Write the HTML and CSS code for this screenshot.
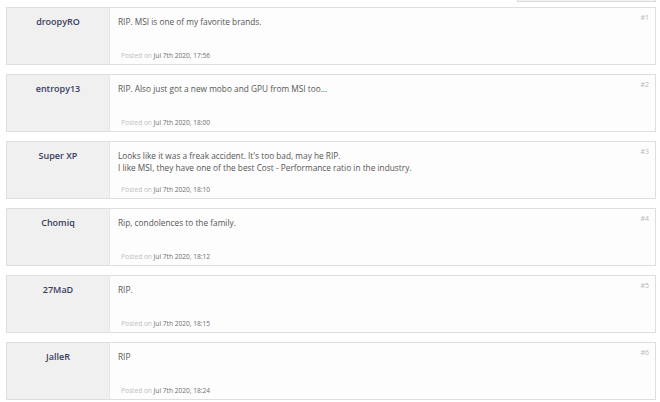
FILE: index.html
```html
<!DOCTYPE html>
<html>
<head>
<meta charset="utf-8">
<link rel="stylesheet" href="styles.css">
</head>
<body>
<div class="page">
  <div class="topbar"><div class="topbox"></div></div>

  <div class="post">
    <div class="author">droopyRO</div>
    <div class="body">
      <div class="num">#1</div>
      <div class="text">RIP. MSI is one of my favorite brands.</div>
      <div class="meta"><span class="lbl">Posted on</span> Jul 7th 2020, 17:56</div>
    </div>
  </div>

  <div class="post">
    <div class="author">entropy13</div>
    <div class="body">
      <div class="num">#2</div>
      <div class="text">RIP. Also just got a new mobo and GPU from MSI too...</div>
      <div class="meta"><span class="lbl">Posted on</span> Jul 7th 2020, 18:00</div>
    </div>
  </div>

  <div class="post">
    <div class="author">Super XP</div>
    <div class="body">
      <div class="num">#3</div>
      <div class="text">Looks like it was a freak accident. It's too bad, may he RIP.<br>I like MSI, they have one of the best Cost - Performance ratio in the industry.</div>
      <div class="meta"><span class="lbl">Posted on</span> Jul 7th 2020, 18:10</div>
    </div>
  </div>

  <div class="post">
    <div class="author">Chomiq</div>
    <div class="body">
      <div class="num">#4</div>
      <div class="text">Rip, condolences to the family.</div>
      <div class="meta"><span class="lbl">Posted on</span> Jul 7th 2020, 18:12</div>
    </div>
  </div>

  <div class="post">
    <div class="author">27MaD</div>
    <div class="body">
      <div class="num">#5</div>
      <div class="text">RIP.</div>
      <div class="meta"><span class="lbl">Posted on</span> Jul 7th 2020, 18:15</div>
    </div>
  </div>

  <div class="post">
    <div class="author">JalleR</div>
    <div class="body">
      <div class="num">#6</div>
      <div class="text">RIP</div>
      <div class="meta"><span class="lbl">Posted on</span> Jul 7th 2020, 18:24</div>
    </div>
  </div>
</div>
</body>
</html>
```

FILE: styles.css
```css
* { box-sizing: border-box; }
html, body { margin: 0; padding: 0; background: #ffffff; }
body { font-family: "Open Sans", "Liberation Sans", sans-serif; }

.page {
  padding: 0 4px 0 6px;
  display: flex;
  flex-direction: column;
  gap: 9px;
}

.topbar {
  display: flex;
  justify-content: flex-end;
  height: 2px;
  margin-bottom: -4px;
}
.topbox {
  width: 139px;
  height: 2px;
  background: #f3f3f3;
  border: 1px solid #dcdcdc;
  border-top: none;
}

.post {
  display: flex;
  height: 58px;
  border: 1px solid #dedede;
  background: #fdfdfd;
}

.author {
  width: 103px;
  flex: none;
  background: #f0f0f0;
  border-right: 1px solid #e6e6e6;
  text-align: center;
  font-size: 9px;
  font-weight: 600;
  color: #3a3d60;
  padding-top: 7px;
}

.body {
  flex: 1;
  position: relative;
  padding: 8px 0 0 8px;
  display: flex;
  flex-direction: column;
}

.num {
  position: absolute;
  top: 5px;
  right: 6px;
  font-size: 7px;
  color: #b8b8b8;
}

.text {
  font-size: 8.3px;
  line-height: 12px;
  color: #555555;
  height: 35px;
}

.meta {
  font-size: 6.6px;
  color: #6e6e6e;
  padding-left: 3px;
}
.lbl { color: #c0c0c0; }
```
